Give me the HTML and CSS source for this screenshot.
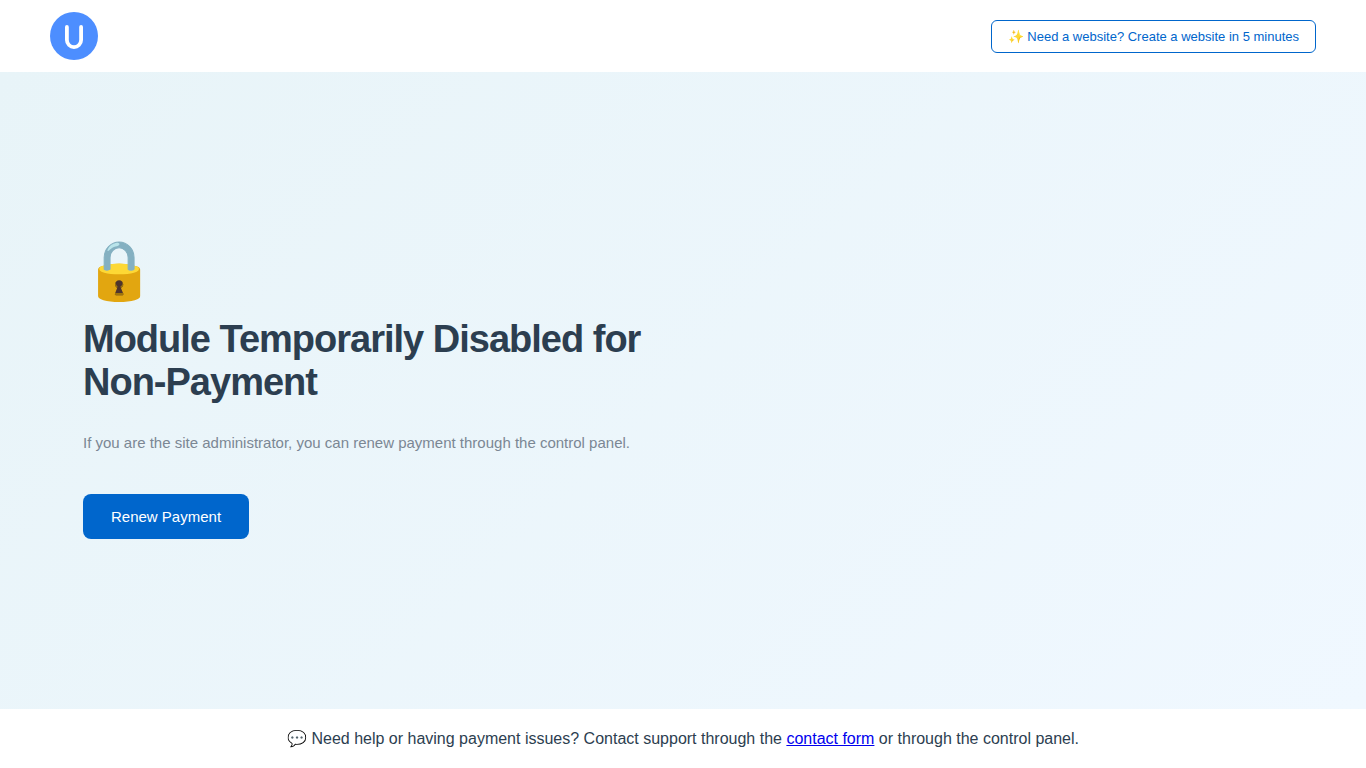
FILE: index.html
```html
<!DOCTYPE html>
<html lang="en">
<head>
<meta charset="utf-8">
<title>Module Temporarily Disabled</title>
<link rel="stylesheet" href="styles.css">
</head>
<body>
<header class="topbar">
  <a class="logo" href="#" aria-label="Logo">
    <svg class="logo-mark" viewBox="0 0 48 48" width="48" height="48">
      <circle cx="24" cy="24" r="24" fill="#4d8eff"/>
      <path d="M16.9 15V28a7.1 7.1 0 0 0 14.2 0V15" fill="none" stroke="#fff" stroke-width="3.8" stroke-linecap="round"/>
    </svg>
  </a>
  <a class="cta" href="#">✨ Need a website? Create a website in 5 minutes</a>
</header>
<main class="hero">
  <div class="hero-body">
    <div class="lock">🔒</div>
    <h1 class="title">Module Temporarily Disabled for Non-Payment</h1>
    <p class="lead">If you are the site administrator, you can renew payment through the control panel.</p>
    <a class="renew" href="#">Renew Payment</a>
  </div>
</main>
<footer class="help">
  <p class="help-text">💬 Need help or having payment issues? Contact support through the <a class="help-link" href="#">contact form</a> or through the control panel.</p>
</footer>
</body>
</html>
```
FILE: styles.css
```css
* { box-sizing: border-box; }
html, body { height: 100%; }
body {
  margin: 0;
  height: 768px;
  display: flex;
  flex-direction: column;
  overflow: hidden;
  background: #fff;
  font-family: "Liberation Sans", Arial, sans-serif;
  color: #2c3e50;
}
.topbar {
  height: 72px;
  flex: none;
  padding: 0 50px;
  display: flex;
  align-items: center;
  justify-content: space-between;
  background: #fff;
}
.logo, .logo-mark { display: block; width: 48px; height: 48px; }
.cta {
  display: block;
  padding: 8px 16px;
  border: 1px solid #0066cc;
  border-radius: 6px;
  color: #0066cc;
  font-size: 13px;
  line-height: 15px;
  text-decoration: none;
}
.hero {
  flex: 1;
  display: flex;
  align-items: center;
  padding: 0 83px;
  background: linear-gradient(135deg, #e8f4f8 0%, #f0f8ff 100%);
}
.hero-body { width: 600px; }
.lock { font-size: 58px; line-height: 55px; margin-bottom: 21px; }
.title {
  margin: 0 0 25px;
  font-size: 38px;
  line-height: 43px;
  font-weight: 700;
  letter-spacing: -1px;
  color: #2c3e50;
}
.lead {
  margin: 0 0 38px;
  font-size: 15px;
  line-height: 27px;
  color: #7b8794;
}
.renew {
  display: inline-block;
  padding: 14px 28px;
  border-radius: 8px;
  background: #0066cc;
  color: #fff;
  font-size: 15px;
  line-height: 17px;
  text-decoration: none;
}
.help {
  flex: none;
  height: 59px;
  display: flex;
  align-items: center;
  justify-content: center;
  background: #fff;
}
.help-text { margin: 0; font-size: 16px; line-height: 18px; color: #2c3e50; }
.help-link { color: #0000ee; text-decoration: underline; }
```
